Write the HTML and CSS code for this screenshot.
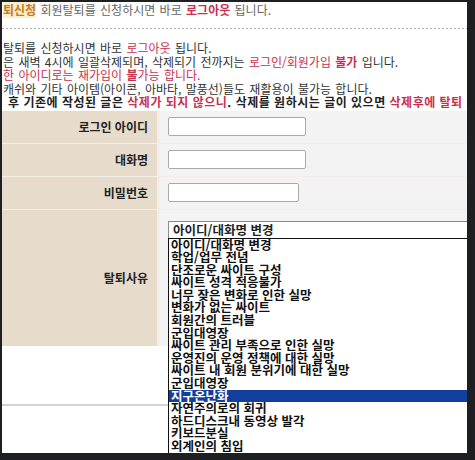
FILE: index.html
```html
<!DOCTYPE html>
<html lang="ko">
<head>
    <meta charset="UTF-8">
    <meta name="viewport" content="width=device-width, initial-scale=1.0">
    <title>회원탈퇴</title>
    <link rel="stylesheet" href="styles.css">
</head>
<body>
    <div class="frame">
        <div class="head"><span class="tag">퇴신청</span> 회원탈퇴를 신청하시면 바로 <b class="red">로그아웃</b> 됩니다.</div>
        <div class="dots"></div>

        <div class="notice">
            <p>탈퇴를 신청하시면 바로 <span class="red">로그아웃</span> 됩니다.</p>
            <p>은 새벽 4시에 일괄삭제되며, 삭제되기 전까지는 <span class="red">로그인/회원가입 <b>불가</b></span> 입니다.</p>
            <p class="red">한 아이디로는 재가입이 <b>불</b>가능 합니다.</p>
            <p>캐쉬와 기타 아이템(아이콘, 아바타, 말풍선)들도 재활용이 불가능 합니다.</p>
            <p class="strong">후 기존에 작성된 글은 <span class="red">삭제가 되지 않으니</span>. 삭제를 원하시는 글이 있으면 <span class="red">삭제후에 탈퇴</span></p>
        </div>

        <div class="form">
            <div class="label">로그인 아이디</div>
            <div class="field"><input type="text" class="text"></div>

            <div class="label">대화명</div>
            <div class="field"><input type="text" class="text"></div>

            <div class="label">비밀번호</div>
            <div class="field"><input type="password" class="text short"></div>

            <div class="label">탈퇴사유</div>
            <div class="field select-cell">
                <div class="select">아이디/대화명 변경</div>
                <ul class="options">
                    <li>아이디/대화명 변경</li>
                    <li>학업/업무 전념</li>
                    <li>단조로운 싸이트 구성</li>
                    <li>싸이트 성격 적응불가</li>
                    <li>너무 잦은 변화로 인한 실망</li>
                    <li>변화가 없는 싸이트</li>
                    <li>회원간의 트러블</li>
                    <li>군입대영장</li>
                    <li>싸이트 관리 부족으로 인한 실망</li>
                    <li>운영진의 운영 정책에 대한 실망</li>
                    <li>싸이트 내 회원 분위기에 대한 실망</li>
                    <li>군입대영장</li>
                    <li class="active">지구온난화</li>
                    <li>자연주의로의 회귀</li>
                    <li>하드디스크내 동영상 발각</li>
                    <li>키보드분실</li>
                    <li>외계인의 침입</li>
                </ul>
            </div>
        </div>

        <div class="blank"></div>
    </div>
</body>
</html>
```

FILE: styles.css
```css
body {
    margin: 0;
    background: #1e1f22;
    font-family: "Noto Sans CJK KR", "Noto Sans", sans-serif;
}
.frame {
    position: relative;
    margin: 2px 0 0 2px;
    width: 465px;
    height: 451px;
    background: #fff;
    overflow: hidden;
}
.head {
    padding-left: 1px;
    font-size: 12px;
    line-height: 15px;
    color: #666;
    white-space: nowrap;
    word-spacing: 1px;
}
.tag {
    color: #c27a2c;
    background: #fbefc8;
    font-weight: bold;
}
.red {
    color: #c8304f;
}
.dots {
    margin-top: 11px;
    height: 1px;
    background: repeating-linear-gradient(90deg, #aaa 0 2px, transparent 2px 4px);
}
.notice {
    margin-top: 12px;
    padding-left: 1px;
    font-size: 12px;
    line-height: 13.5px;
    color: #333;
    white-space: nowrap;
    word-spacing: 1px;
}
.notice p {
    margin: 0;
}
.notice .strong {
    font-weight: bold;
    letter-spacing: 0.5px;
    word-spacing: 0;
    padding-left: 5px;
    color: #222;
}
.form {
    margin-top: 2px;
    display: grid;
    grid-template-columns: 155px 1fr;
    grid-template-rows: 32px 32px 32px 136px;
    column-gap: 3px;
    row-gap: 1px;
    background: #f3efe8;
}
.label {
    background: #e7dccc;
    display: flex;
    align-items: center;
    justify-content: flex-end;
    padding-right: 9px;
    font-size: 12px;
    font-weight: bold;
    color: #222;
}
.field {
    background: #f3f3f3;
    display: flex;
    align-items: center;
    padding-left: 8px;
}
.text {
    box-sizing: border-box;
    width: 138px;
    height: 19px;
    margin: 0;
    border: 1px solid #a9a9a9;
    border-radius: 2px;
    background: #fff;
}
.text.short {
    width: 131px;
}
.select-cell {
    position: relative;
    align-items: flex-start;
}
.select {
    margin-top: 11px;
    box-sizing: border-box;
    width: 320px;
    height: 18px;
    border: 1px solid #8a8a8a;
    background: #fff;
    padding-left: 4px;
    font-size: 12.5px;
    line-height: 16px;
    font-weight: bold;
    color: #222;
    white-space: nowrap;
}
.options {
    position: absolute;
    top: 28px;
    left: 8px;
    width: 320px;
    margin: 0;
    padding: 0;
    list-style: none;
    background: #fff;
    border-top: 1px solid #111;
    border-left: 1px solid #111;
    font-size: 12.5px;
    line-height: 12.6px;
    font-weight: bold;
    color: #111;
}
.options li {
    padding-left: 2px;
    white-space: nowrap;
}
.options li.active {
    background: #123f9e;
    color: #fff;
}
.blank {
    height: 58px;
    border-bottom: 2px solid #d3d3d3;
}
```
